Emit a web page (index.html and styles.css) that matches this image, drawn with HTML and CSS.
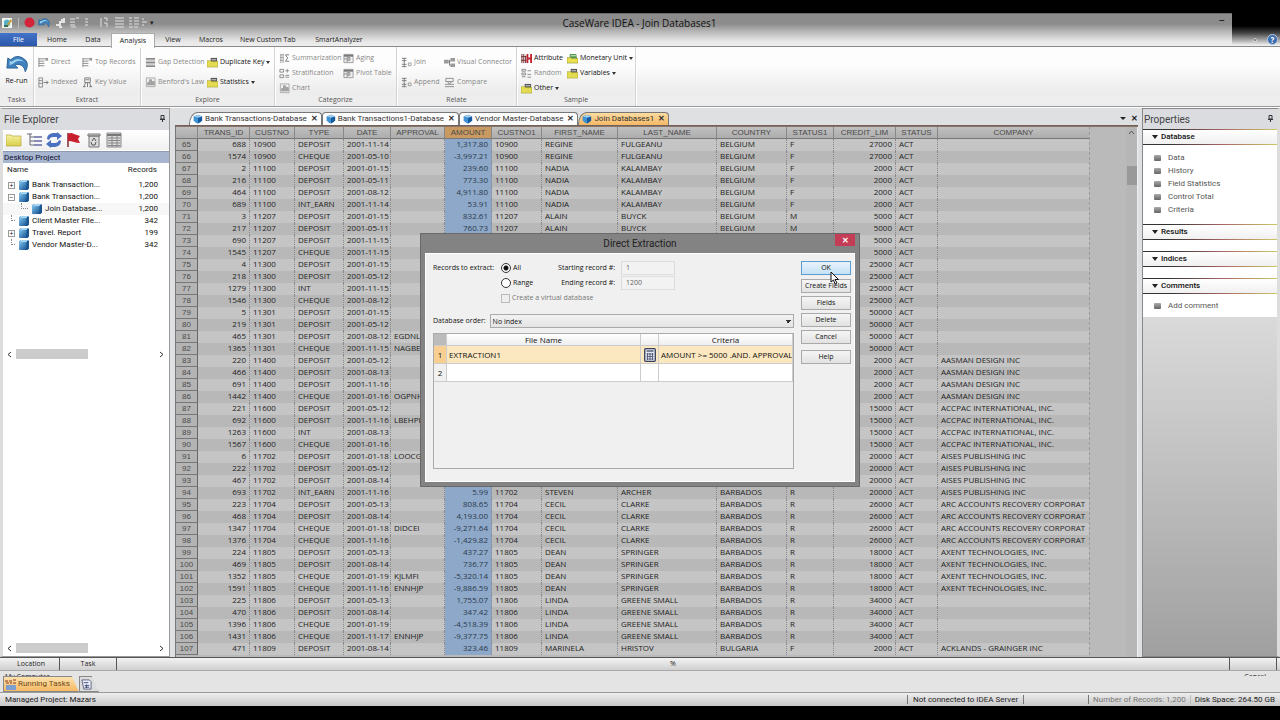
FILE: index.html
```html
<!DOCTYPE html>
<html lang="en">
<head>
<meta charset="utf-8">
<title>CaseWare IDEA - Join Databases1</title>
<link rel="stylesheet" href="styles.css">
</head>
<body>
<svg class="defs" aria-hidden="true">
  <defs>
    <linearGradient id="gb" x1="0" y1="0" x2="1" y2="1"><stop offset="0" stop-color="#7fc4ee"/><stop offset="1" stop-color="#14508f"/></linearGradient>
    <linearGradient id="gf" x1="0" y1="0" x2="0" y2="1"><stop offset="0" stop-color="#f6f0a0"/><stop offset="1" stop-color="#d8cf4a"/></linearGradient>
    <symbol id="db" viewBox="0 0 12 12"><path d="M1 2.500 3 1h7l1 1v7.500L9.500 11H2l-1-1z" fill="#1b568f"/><path d="M1 3h7.500v8H2l-1-1z" fill="url(#gb)"/><path d="M1 3 3 1h7L8.500 3z" fill="#a5d5f2"/></symbol>
    <symbol id="shield" viewBox="0 0 12 12"><path d="M1 3 6 1l5 2v4.500Q9.500 10.500 6 11.500 2.500 10.500 1 7.500z" fill="#17599f"/><path d="M1 3 6 4.500v7Q2.500 10.500 1 7.500z" fill="#3d93d6"/><path d="M1 3 6 1l5 2-5 1.500z" fill="#9fd0f2"/></symbol>
    <symbol id="list" viewBox="0 0 12 12"><path d="M1 2h7M1 4.500h6M1 7h6M1 9.500h6M1 1v10" stroke="#888" fill="none"/><path d="M8 1h3v3H8z" fill="#999"/></symbol>
    <symbol id="idx" viewBox="0 0 12 12"><path d="M1 1h4v10H1zM1 4h4M1 7h4" stroke="#888" fill="none"/><path d="M6 6h5M9 4l2 2-2 2" stroke="#777" fill="none"/></symbol>
    <symbol id="key" viewBox="0 0 12 12"><path d="M3 1h6v5H3zM4 6 2 11M8 6l2 5M6 6v5M1 10.500h3M8 10.500h3M4 3h4" stroke="#777" fill="none"/></symbol>
    <symbol id="gap" viewBox="0 0 12 12"><path d="M1 2h10M1 6h10M1 10h10" stroke="#8a8a8a" stroke-width="2"/><path d="M1 4h10M1 8h10" stroke="#c5c5c5"/></symbol>
    <symbol id="chart" viewBox="0 0 12 12"><path d="M1.500 1v9.500H11V1z" stroke="#aaa" fill="#eee"/><path d="M3 9V6h1v3M5 9V3h2v6M8 9V5h2v4" stroke="#999" fill="#aaa"/></symbol>
    <symbol id="tbl" viewBox="0 0 12 12"><path d="M1 1.500h10v9H1z" fill="#eee" stroke="#999"/><path d="M1 3h10" stroke="#777" stroke-width="2"/><path d="M4.500 3v7M7.500 5v3h-2v-3zM1 6.500h3" stroke="#888" fill="none"/></symbol>
    <symbol id="sum" viewBox="0 0 12 12"><path d="M1 2h4M1 5h4M1 8h4M2 1v10M4.500 1v10" stroke="#999" fill="none"/><path d="M11 2H7l2.500 3.500L7 9h4" stroke="#777" fill="none"/></symbol>
    <symbol id="strat" viewBox="0 0 12 12"><path d="M1 1.500h4v3H1zM1 7.500h4v3H1zM7 3h4M9 1v4M7 8h4M7 10h4" stroke="#888" fill="none"/></symbol>
    <symbol id="join" viewBox="0 0 12 12"><path d="M1 1.500h5M1 4h5M3.500 1v10M1 8h5M1 10.500h5" stroke="#777" fill="none"/><path d="M8 6.500h3v3H8z" fill="none" stroke="#999"/></symbol>
    <symbol id="vc" viewBox="0 0 12 12"><path d="M0 3h5v4H0zM7 1h5v4H7zM7 7h5v4H7z" fill="#9a9a9a"/><path d="M5 5h2M6 3v6h1" stroke="#777" fill="none"/></symbol>
    <symbol id="cmp" viewBox="0 0 12 12"><path d="M2 1.500h8v3.500H2zM1 10.500h10M1 8h10M4 5l2 3 2-3" stroke="#888" fill="none"/></symbol>
    <symbol id="rnd" viewBox="0 0 12 12"><path d="M1 1.500h4v2H1zM1 5.500h4v2H1zM1 9.500h4M7 3h4M7 7h4M7 10h4" stroke="#888" fill="none"/></symbol>
    <symbol id="attr" viewBox="0 0 12 12"><path d="M1 1v10M3 1v10M5 3v8M0 4h6M0 8h6" stroke="#6b2b2b" fill="none"/><path d="M7 1v10M11 1v10M7 6h4" stroke="#c0222f" stroke-width="2"/></symbol>
    <symbol id="fy" viewBox="0 0 12 12"><path d="M4 1h7v5H4z" fill="#555"/><path d="M5 3h5" stroke="#ddd"/><path d="M0 4h4l1 1h7v6H0z" fill="#e3dc52" stroke="#a49a28" stroke-width=".6"/></symbol>
    <symbol id="fg" viewBox="0 0 12 12"><path d="M3 1h7l1 5H3z" fill="#4e9a4a"/><path d="M4 3h6" stroke="#e5efdc"/><path d="M0 5h4l1 1h7v5H0z" fill="#e8e04f" stroke="#8d8b28" stroke-width=".6"/></symbol>
    <symbol id="undo" viewBox="0 0 24 20"><path d="M1 15 2 4l3 2Q13-2 22 7q3 5-1 12-1-7-7-8-3 0-4 1l3 3z" fill="#3f82bd" stroke="#2a5f92"/><path d="M4 12 4 7l2 1Q13 2 20 8q-8-3-12 2z" fill="#9fd2f0"/></symbol>
    <symbol id="calc" viewBox="0 0 12 14"><rect x=".7" y=".7" width="10.600" height="12.600" rx="1" fill="#e5e8ee" stroke="#35415c" stroke-width="1.300"/><path d="M2.500 3h7" stroke="#56617a" stroke-width="1.500"/><path d="M2.500 6h7M2.500 8.500h7M2.500 11h7M3.500 5v7M6 5v7M8.500 5v7" stroke="#4c5a78" stroke-width=".9"/></symbol>
  </defs>
</svg>

<header class="titlebar">
  <div class="frame">
    <div class="qat">
      <svg width="12" height="12" viewBox="0 0 12 12"><path d="M1 1h10v10H1z" fill="#f2f2ee"/><path d="M3 4q3-3 6 0v4q-3 3-6 0z" fill="#53b2c9"/><path d="m6 7 4-5 1 2-4 5z" fill="#bfa23a"/><path d="M3 8h4v2H3z" fill="#3c6f52"/></svg>
      <i class="qsep"></i>
      <svg width="11" height="11" viewBox="0 0 12 12"><circle cx="6" cy="6" r="5.500" fill="#d4243c"/></svg>
      <svg width="12" height="11"><use href="#undo"/></svg>
      <svg class="pale" width="92" height="12" viewBox="0 0 92 12"><path d="M1 8h4V5h4V1M4 10h3M6 3h4" stroke-width="2"/><path d="M15 2h5M15 5h5M15 8h5M21 1h3M16 10h5M30 2h3M30 5h3M30 8h3M46 1v9M49 1h3v3M49 6h3v4M60 1h9M60 4h9M60 7h9M60 10h9M74 1h3M79 1h5M74 4h3M79 4h5M74 7h3M79 7h5M74 10h4M79 10h4M87 2h2M87 5h3M87 8h2M90 5h2"/></svg>
      <span class="more">▾</span>
    </div>
    <h1>CaseWare IDEA - Join Databases1</h1>
    <button class="min" aria-label="Minimize">–</button>
  </div>
  <nav class="menu">
    <button class="file">File</button><button>Home</button><button>Data</button><button class="on">Analysis</button><button>View</button><button>Macros</button><button class="w3">New Custom Tab</button><button class="w3">SmartAnalyzer</button>
    <span class="help"><svg width="6" height="5" viewBox="0 0 6 5"><path d="m1 4 2-3 2 3z" fill="#555" stroke="#fff" stroke-width=".6"/></svg><b>?</b></span>
  </nav>
</header>

<section class="ribbon">
  <div class="grp tasks"><div class="big"><button><svg width="22" height="19"><use href="#undo"/></svg>Re-run</button></div><p>Tasks</p></div>
  <div class="grp extract"><div class="two">
    <button disabled><svg><use href="#list"/></svg>Direct</button><button disabled><svg><use href="#list"/></svg>Top Records</button>
    <button disabled><svg><use href="#idx"/></svg>Indexed</button><button disabled><svg><use href="#key"/></svg>Key Value</button></div><p>Extract</p></div>
  <div class="grp explore"><div class="two">
    <button disabled><svg><use href="#gap"/></svg>Gap Detection</button><button><svg><use href="#fy"/></svg>Duplicate Key <i></i></button>
    <button disabled><svg><use href="#chart"/></svg>Benford's Law</button><button><svg><use href="#fy"/></svg>Statistics <i></i></button></div><p>Explore</p></div>
  <div class="grp categ"><div class="three">
    <button disabled><svg><use href="#sum"/></svg>Summarization</button><button disabled><svg><use href="#tbl"/></svg>Aging</button>
    <button disabled><svg><use href="#strat"/></svg>Stratification</button><button disabled><svg><use href="#tbl"/></svg>Pivot Table</button>
    <button disabled><svg><use href="#chart"/></svg>Chart</button></div><p>Categorize</p></div>
  <div class="grp relate"><div class="two">
    <button disabled><svg><use href="#join"/></svg>Join</button><button disabled><svg><use href="#vc"/></svg>Visual Connector</button>
    <button disabled><svg><use href="#join"/></svg>Append</button><button disabled><svg><use href="#cmp"/></svg>Compare</button></div><p>Relate</p></div>
  <div class="grp sample"><div class="three">
    <button><svg><use href="#attr"/></svg>Attribute</button><button><svg><use href="#fg"/></svg>Monetary Unit <i></i></button>
    <button disabled><svg><use href="#rnd"/></svg>Random</button><button><svg><use href="#fy"/></svg>Variables <i></i></button>
    <button><svg><use href="#fy"/></svg>Other <i></i></button></div><p>Sample</p></div>
</section>

<main class="work">
  <aside class="explorer">
    <h2>File Explorer <svg class="pin" viewBox="0 0 5 7"><path d="M1 .5h3v3.500H1zM0 4.500h5M2.500 4v3" fill="none" stroke="#333"/></svg></h2>
    <div class="tools">
      <svg viewBox="0 0 16 16"><path d="M0 3h5l1 1h9v10H0z" fill="url(#gf)" stroke="#b5a63c" stroke-width=".7"/></svg>
      <svg viewBox="0 0 16 16"><path d="M1 2h5M4 2v11h4M4 5h4M4 9h4" stroke="#667" fill="none"/><path d="M8 5h8M8 9h8M8 13h8" stroke="#8a8bb8" stroke-width="2"/></svg>
      <svg viewBox="0 0 16 16"><path d="M1 7q0-5 6-6h4V0l5 4-5 4V5H7Q4 5 3 8zM15 9q0 5-6 6H5v1l-5-4 5-4v3h4q3 0 4-3z" fill="#4a70c0"/></svg>
      <svg viewBox="0 0 16 16"><path d="M2 1v14" stroke="#7c2a30" stroke-width="1.500"/><path d="M2 2q3-2 6 0l6 2-2 3 2 4q-3 0-6-1t-6-1z" fill="#c8202e"/></svg>
      <svg viewBox="0 0 16 16"><path d="M2 2h12v2H2zM3 4h10v11H3z" fill="#ddd" stroke="#777"/><path d="m6 9 2-3 2 3M10 10l-1 3H6l-1-3" stroke="#555" fill="none"/></svg>
      <svg viewBox="0 0 16 16"><path d="M1 1h14v14H1z" fill="#ddd" stroke="#888"/><path d="M1 3h14" stroke="#777" stroke-width="2"/><path d="M2 6h12M2 8.500h12M2 11h12M2 13.500h12M6 3v12M11 3v12" stroke="#888"/></svg>
    </div>
    <div class="proj">Desktop Project</div>
    <table class="tree">
      <thead><tr><th>Name</th><th>Records</th></tr></thead>
      <tbody>
        <tr><td><b class="pm">+</b><svg><use href="#db"/></svg>Bank Transaction...</td><td>1,200</td></tr>
        <tr><td><b class="pm">−</b><svg><use href="#db"/></svg>Bank Transaction...</td><td>1,200</td></tr>
        <tr class="sel"><td class="child"><b class="el"></b><svg><use href="#db"/></svg>Join Database...</td><td>1,200</td></tr>
        <tr><td><b class="ln"></b><svg><use href="#db"/></svg>Client Master File...</td><td>342</td></tr>
        <tr><td><b class="pm">+</b><svg><use href="#db"/></svg>Travel. Report</td><td>199</td></tr>
        <tr><td><b class="ln"></b><svg><use href="#db"/></svg>Vendor Master-D...</td><td>342</td></tr>
      </tbody>
    </table>
    <div class="hs first"><svg viewBox="0 0 5 7"><path d="M4 1 1 3.500 4 6"/></svg><i></i><svg viewBox="0 0 5 7"><path d="m1 1 3 2.500L1 6"/></svg></div>
    <div class="hs last"><svg viewBox="0 0 5 7"><path d="M4 1 1 3.500 4 6"/></svg><i></i><svg viewBox="0 0 5 7"><path d="m1 1 3 2.500L1 6"/></svg></div>
  </aside>

  <section class="center">
    <div class="tabs">
      <button class="slant"><svg><use href="#shield"/></svg>Bank Transactions-Database<b>✕</b></button>
      <button><svg><use href="#shield"/></svg>Bank Transactions1-Database<b>✕</b></button>
      <button><svg><use href="#shield"/></svg>Vendor Master-Database<b>✕</b></button>
      <button class="on slant"><svg><use href="#shield"/></svg>Join Databases1<b>✕</b></button>
      <span class="tabend"><i></i>✕</span>
    </div>
    <div class="sheet">
      <table class="grid">
        <colgroup><col class="c0"><col class="c1"><col class="c2"><col class="c3"><col class="c4"><col class="c5"><col class="c6"><col class="c7"><col class="c8"><col class="c9"><col class="c10"><col class="c11"><col class="c12"><col class="c13"><col class="c14"></colgroup>
        <thead><tr><th></th><th>TRANS_ID</th><th>CUSTNO</th><th>TYPE</th><th>DATE</th><th>APPROVAL</th><th class="amt">AMOUNT</th><th>CUSTNO1</th><th>FIRST_NAME</th><th>LAST_NAME</th><th>COUNTRY</th><th>STATUS1</th><th>CREDIT_LIM</th><th>STATUS</th><th>COMPANY</th></tr></thead>
        <tbody id="rows"></tbody>
      </table>
      <div class="vs"><svg width="7" height="5" viewBox="0 0 7 5"><path d="m1 4 2.500-3L6 4" fill="none" stroke="#555"/></svg><i></i></div>
    </div>
  </section>

  <aside class="props">
    <h2>Properties <svg class="pin" viewBox="0 0 5 7"><path d="M1 .5h3v3.500H1zM0 4.500h5M2.500 4v3" fill="none" stroke="#333"/></svg></h2>
    <h3><i></i>Database</h3>
    <ul class="items"><li>Data</li><li>History</li><li>Field Statistics</li><li>Control Total</li><li>Criteria</li></ul>
    <h3><i></i>Results</h3><div class="empty"></div>
    <h3><i></i>Indices</h3><div class="empty"></div>
    <h3><i></i>Comments</h3>
    <ul class="add"><li>Add comment</li></ul>
    <div class="rest"></div>
  </aside>

  <form class="dialog" role="dialog" aria-label="Direct Extraction">
    <div class="dtitle">Direct Extraction<button type="button" aria-label="Close">✕</button></div>
    <div class="dbody">
      <div class="left">
        <div class="opts">
          <span>Records to extract:</span>
          <label><input type="radio" name="r" checked>All</label>
          <label class="rl" for="s">Starting record #:</label><input type="text" id="s" value="1" disabled>
          <span></span>
          <label><input type="radio" name="r">Range</label>
          <label class="rl" for="e">Ending record #:</label><input type="text" id="e" value="1200" disabled>
          <span></span>
          <label class="virt"><input type="checkbox" disabled>Create a virtual database</label>
        </div>
        <div class="order"><label for="o">Database order:</label><select id="o"><option>No index</option></select></div>
        <div class="files"><table>
          <thead><tr><th class="n"></th><th>File Name</th><th class="k"></th><th class="cr">Criteria</th></tr></thead>
          <tbody>
            <tr class="cur"><th>1</th><td>EXTRACTION1</td><td><svg width="12" height="14"><use href="#calc"/></svg></td><td>AMOUNT &gt;= 5000 .AND. APPROVAL=</td></tr>
            <tr><th>2</th><td></td><td></td><td></td></tr>
          </tbody></table></div>
      </div>
      <div class="btns"><button type="button" class="hot">OK</button><button type="button">Create Fields</button><button type="button">Fields</button><button type="button">Delete</button><button type="button">Cancel</button><button type="button" class="hp">Help</button></div>
    </div>
    <svg class="cursor" width="9" height="14" viewBox="0 0 9 14"><path d="M1 1v10l2.500-2L5 13l2-1-2-3.500h3.500z" fill="#fff" stroke="#111"/></svg>
  </form>
</main>

<section class="dock">
  <table><thead><tr><th class="d1">Location</th><th class="d1">Task</th><th>%</th><th class="d4"></th></tr></thead></table>
  <div class="cut"><span>My Computer</span><span class="cc">Cancel</span></div>
  <div class="dtabs"><button class="run"><svg width="12" height="11" viewBox="0 0 12 11"><path d="M0 2h3M4 2h3M8 1h3M1 4h3M5 4h2M8 4h3" stroke="#8a3b1c"/><path d="M1 6h10v5H1z" fill="#7c9fd0"/></svg>Running Tasks</button><button class="doc" aria-label="Log"><svg width="11" height="11" viewBox="0 0 12 12"><path d="M1 1h8l2 2v8H3z" fill="#eef" stroke="#56617a"/><path d="M3 4h5M4 7h5M4 9h5M6 6v4" stroke="#3c4a6b" fill="none"/></svg></button></div>
</section>
<footer class="status"><span class="proj-name">Managed Project: Mazars</span><span class="srv">Not connected to IDEA Server</span><span class="num">Number of Records: 1,200</span><span class="disk">Disk Space: 264.50 GB</span></footer>
<div class="black"></div>
<script src="app.js"></script>
</body>
</html>
```

FILE: styles.css
```css
* { box-sizing: border-box; }
body { margin: 0; min-height: 100vh; display: flex; flex-direction: column; background: #e4e4e4; font: 8px/12px Roboto, "Open Sans", sans-serif; color: #222; }
button, input, select { font: inherit; color: inherit; margin: 0; padding: 0; border: 0; background: none; border-radius: 0; }
h1, h2, h3, p, ul { margin: 0; padding: 0; font-weight: normal; list-style: none; }
table { border-collapse: separate; border-spacing: 0; }
th { font-weight: normal; }
th, td { padding: 0; }
.defs { position: absolute; width: 0; height: 0; }

.titlebar { background: linear-gradient(#000 26px, #444 33px, #eee 45px); padding-top: 13px; position: relative; }
.frame { display: flex; align-items: flex-start; height: 34px; margin-right: 48px; background: linear-gradient(#8c8c8c, #8c8c8c 10px, #b4b4b4 17px, #e6e6e6 27px, #f0f0f0); border-top: 1px solid #6c6c6c; }
.qat { display: flex; align-items: center; gap: 3px; flex: 1 0 54px; padding: 1px 0 0 1px; height: 16px; }
.qsep { width: 1px; height: 10px; background: #bbb; margin: 0 2px; }
.pale { fill: none; stroke: #e2e2e2; margin-left: 2px; }
.more { color: #222; font-size: 7px; }
h1 { font: 10px/18px "Open Sans", sans-serif; color: #111; }
.min { flex: 1 0 0; text-align: right; padding-right: 7px; font-size: 10px; line-height: 14px; color: #111; }
.menu { display: flex; position: absolute; left: 0; right: 0; bottom: 0; height: 14px; border-bottom: 1px solid #8a8a8a; font: 7px/14px "Open Sans", sans-serif; }
.menu button { padding: 0 8px; min-width: 36px; color: #222; }
.menu button.w3 { padding: 0 9px; min-width: 69px; }
.menu .file { background: linear-gradient(#4374c9, #2a57a9); color: #fff; min-width: 37px; margin-right: 2px; }
.menu .on { background: #fdfdfd; height: 15px; border: 1px solid #aaa; border-bottom: 0; min-width: 44px; padding: 0 5px; }
.help { margin-left: auto; display: flex; align-items: center; gap: 9px; padding-right: 2px; }
.help b { width: 11px; height: 11px; border-radius: 50%; background: #3c6dad; border: 1px solid #b8cce2; color: #fff; font: bold 8px/9px "Open Sans", sans-serif; text-align: center; }

.ribbon { display: flex; height: 60px; background: linear-gradient(#fdfdfd 30%, #ededed 75%, #eee); border-bottom: 1px solid #999; font: 7px/12px "Open Sans", sans-serif; }
.grp { display: flex; flex-direction: column; border-right: 1px solid #d4d4d4; box-shadow: 1px 0 #fff; }
.grp p { text-align: center; color: #555; line-height: 12px; }
.grp button { display: flex; align-items: center; gap: 2px; white-space: nowrap; color: #111; }
.grp button:disabled { color: #888; }
.grp button svg { width: 11px; height: 11px; flex: none; }
.grp i { border: 2px solid transparent; border-top: 3px solid #333; border-bottom: 0; }
.tasks { width: 34px; } .extract { width: 107px; } .explore { width: 134px; } .categ { width: 122px; } .relate { width: 120px; } .sample { width: 119px; }
.big { height: 47px; padding-top: 7px; }
.grp .big button { flex-direction: column; margin: 0 auto; }
.grp .big svg { width: 22px; height: 19px; }
.two, .three { display: grid; height: 47px; padding: 5px 0 0 4px; grid-auto-rows: 20px; align-content: start; justify-content: start; }
.three { grid-auto-rows: 14px; row-gap: 1px; padding-top: 4px; }
.extract .two { grid-template-columns: 44px auto; }
.explore .two { grid-template-columns: 62px auto; }
.categ .three { grid-template-columns: 64px auto; }
.relate .two { grid-template-columns: 43px auto; }
.sample .three { grid-template-columns: 46px auto; }

.work { flex: 1; display: flex; position: relative; background: #dfe0e2; border-top: 1px solid #fff; }
.explorer { width: 170px; display: flex; flex-direction: column; border: 1px solid #999; border-left: 3px solid #ddd; background: #fff; }
h2 { font-size: 10px; line-height: 20px; color: #444; display: flex; justify-content: space-between; background: #dbdce0; padding: 1px 4px 0 1px; }
.pin { width: 5px; height: 7px; margin-top: 5px; }
.tools { display: flex; gap: 4px; padding: 1px 3px; background: linear-gradient(#fff, #f0f0f0); }
.tools svg { width: 16px; height: 18px; }
.proj { background: #a8b5cf; line-height: 11px; color: #113; padding-left: 1px; border-top: 1px solid #8d9ab4; margin-top: 1px; }
.tree { width: 100%; }
.tree th { text-align: left; padding: 0 4px; line-height: 14px; height: 16px; vertical-align: top; }
.tree th + th, .tree td + td { text-align: right; }
.tree th + th { padding-right: 12px; }
.tree td + td { padding-right: 11px; }
.tree td { height: 12px; white-space: nowrap; color: #111; }
.tree td:first-child { display: flex; align-items: center; padding-left: 5px; }
.tree td.child { padding-left: 18px; }
.tree td svg { width: 12px; height: 12px; margin: 0 2px 0 3px; }
.tree .sel td { background: #f7f7f7; }
.pm { width: 7px; height: 7px; border: 1px solid #999; font: 7px/5px "Open Sans", sans-serif; text-align: center; }
.ln, .el { width: 7px; height: 6px; border-left: 1px dotted #888; border-bottom: 1px dotted #888; align-self: flex-start; }
.tree .ln { margin-left: 3px; width: 4px; }
.hs { display: flex; align-items: center; height: 12px; padding: 0 5px 0 4px; }
.hs svg { width: 5px; height: 7px; fill: none; stroke: #333; }
.hs i { width: 72px; height: 10px; background: #ccc; margin: 0 auto 0 4px; }
.hs.first { margin-top: 97px; }
.hs.last { margin-top: auto; margin-bottom: 2px; }

.center { flex: 1; min-width: 0; display: flex; flex-direction: column; padding: 4px 4px 0 5px; }
.tabs { display: flex; height: 14px; padding-left: 14px; border-bottom: 1px solid #6d625c; }
.tabs button { display: flex; align-items: center; gap: 2px; padding: 0 3px; background: #fdfdfd; border: 1px solid #777; border-bottom: 0; border-radius: 4px 4px 0 0; white-space: nowrap; color: #333; }
.tabs button.slant { border-top-left-radius: 9px 12px; }
.tabs button svg { width: 10px; height: 10px; }
.tabs button b { margin-left: 2px; font-size: 8px; }
.tabs .on { background: linear-gradient(#fbdca0, #f5b866); }
.tabend { margin-left: auto; display: flex; align-items: center; gap: 5px; font-weight: bold; }
.tabend i { border: 3px solid transparent; border-top: 3px solid #222; border-bottom: 0; }
.sheet { flex: 1; display: flex; justify-content: space-between; background: #bababa; border-left: 1px solid #777; border-top: 1px solid #8c7468; }
.grid { table-layout: fixed; width: 913px; flex: none; align-self: flex-start; color: #222; border-right: 1px dashed #9a9a9a; font-family: "Open Sans", sans-serif; }
.grid th, .grid td { height: 12px; line-height: 11px; white-space: nowrap; overflow: hidden; vertical-align: middle; padding: 0 3px; border-right: 1px dotted #8a8a8a; }
.grid td { line-height: 10px; vertical-align: top; }
.grid td:last-child, .grid th:last-child { border-right: 0; }
.grid th { font-family: "Liberation Sans", sans-serif; color: #4a4a4a; background: linear-gradient(#c0c0c0, #adadad); border-bottom: 1px solid #777; border-right: 1px solid #888; padding: 0; }
.grid thead th.amt { background: #c89a62; }
.grid tbody th { background: #b4b4b4; border-right: 1px solid #666; }
.grid tbody tr { background: #c5c5c5; }
.grid tbody tr:nth-child(even) { background: #b8b8b8; }
.grid td.r { text-align: right; }
.grid td.amt { background: #8da8c8; color: #2c3a4d; }
.c0 { width: 22px; } .c1 { width: 52px; } .c2 { width: 45px; } .c3 { width: 49px; } .c4 { width: 47px; } .c5 { width: 54px; } .c6 { width: 47px; } .c7 { width: 50px; } .c8 { width: 76px; } .c9 { width: 99px; } .c10 { width: 70px; } .c11 { width: 47px; } .c12 { width: 62px; } .c13 { width: 42px; } .c14 { width: 151px; }
.vs { width: 12px; display: flex; flex-direction: column; align-items: center; padding-top: 3px; background: #b6b6b6; border-right: 1px solid #eee; }
.vs i { width: 10px; height: 19px; background: #999; margin-top: 31px; }

.props { width: 138px; border: 1px solid #888; border-right: 3px solid #ddd; display: flex; flex-direction: column; background: #fff; }
.props h2 { line-height: 19px; }
h3 { font-size: 8px; font-weight: 500; line-height: 14px; padding-left: 9px; display: flex; align-items: center; gap: 3px; color: #111; background: linear-gradient(#fff, #f0f0f0); border-top: 1px solid #777; border-bottom: 1px solid; border-image: linear-gradient(90deg, #333 20%, #a66 60%, #cc6) 1; }
h3 i { border: 3px solid transparent; border-top: 4px solid #222; border-bottom: 0; }
.items { padding: 6px 0 8px; }
.props li { display: flex; align-items: center; height: 13px; padding-left: 11px; gap: 7px; color: #555; }
.props li::before { content: ""; width: 7px; height: 6px; background: linear-gradient(#aaa, #666); border-radius: 1px; }
.empty { height: 11px; }
.add { padding: 5px 0; }
.rest { flex: 1; background: linear-gradient(#dadada, #a0a0a0); }

.dialog { position: absolute; left: 0; right: 0; top: 125px; width: 440px; margin: 0 auto; background: #838383; border: 1px solid #6a6a6a; padding: 0 4px 4px; font: 7px/14px "Open Sans", sans-serif; color: #111; }
.dtitle { position: relative; font: 10px/19px Roboto, sans-serif; text-align: center; color: #222; }
.dtitle button { position: absolute; right: 0; top: 0; width: 20px; height: 12px; background: #c43c56; color: #fff; font: bold 8px/12px "Open Sans", sans-serif; }
.dbody { display: flex; gap: 7px; background: #f0f0f0; border: 1px solid #fff; padding: 7px 3px 12px 7px; }
.left { flex: 1; min-width: 0; }
.opts { display: grid; grid-template-columns: 68px 54px 66px 54px; row-gap: 1px; align-items: center; }
.opts label { display: flex; align-items: center; gap: 2px; white-space: nowrap; }
.opts .rl { justify-content: flex-end; padding-right: 6px; }
.opts input[type=text] { width: 54px; height: 14px; padding: 0 4px; border: 1px solid #ddd; background: #f2f2f2; color: #666; }
.opts input[type=radio] { width: 10px; height: 10px; appearance: none; border: 1px solid #333; border-radius: 50%; background: #fff; }
.opts input[type=radio]:checked { background: radial-gradient(#111 0 2px, #fff 3px); }
.opts input[type=checkbox] { width: 9px; height: 9px; appearance: none; border: 1px solid #bbb; background: #eee; }
.virt { grid-column: 2 / 5; color: #777; }
.order { display: flex; align-items: center; margin: 9px 0 5px; gap: 4px; }
.order select { flex: 1; height: 14px; appearance: none; border: 1px solid #aaa; padding: 0 2px; background: linear-gradient(45deg, transparent 50%, #333 50%) calc(100% - 5px) 5px / 3px 3px no-repeat, linear-gradient(-45deg, transparent 50%, #333 50%) calc(100% - 2px) 5px / 3px 3px no-repeat, linear-gradient(#f2f2f2, #e4e4e4); }
.files { height: 136px; border: 1px solid #aaa; overflow: hidden; }
.files table { width: 100%; table-layout: fixed; font-size: 8px; line-height: 11px; }
.files thead th { height: 12px; background: linear-gradient(#fff, #eee); }
.files th, .files td { border-right: 1px solid #ccc; border-bottom: 1px solid #ccc; white-space: nowrap; overflow: hidden; }
.files td { background: #fff; height: 18px; padding: 0 2px; vertical-align: middle; }
.files thead .n { width: 13px; background: #bbb; }
.files thead .k { width: 18px; }
.files thead .cr { width: 134px; }
.files .cur td { background: #fbe7c0; }
.files .cur th { background: #f8cf91; }
.files svg { display: block; margin: 0 auto; }
.btns { width: 50px; display: flex; flex-direction: column; gap: 3px; }
.btns button { height: 14px; line-height: 12px; border: 1px solid #aaa; background: linear-gradient(#f5f5f5, #e2e2e2); white-space: nowrap; }
.btns .hot { border-color: #5a9bd0; background: linear-gradient(#e8f3fc, #c5e1f6); margin-bottom: 1px; }
.btns .hp { margin-top: 3px; }
.cursor { position: absolute; left: 409px; top: 37px; }

.dock { border-top: 1px solid #555; background: #e4e4e4; font: 7px/12px "Open Sans", sans-serif; }
.dock table { width: 100%; padding: 0 3px; table-layout: fixed; background: linear-gradient(#f3f3f3, #d0d0d0); border-bottom: 1px solid #aaa; }
.dock th { height: 12px; border-right: 1px solid #555; }
.d1 { width: 57px; } .d4 { width: 47px; }
.cut { display: flex; justify-content: space-between; height: 5px; overflow: hidden; padding: 0 14px 0 5px; }
.dtabs { display: flex; padding-left: 3px; height: 16px; }
.dtabs button { display: flex; align-items: center; gap: 1px; border: 1px solid #888; clip-path: polygon(0 0, calc(100% - 7px) 0, 100% 100%, 0 100%); padding: 0 8px 0 1px; }
.dtabs .run { background: linear-gradient(#fde2ae, #f6b963); color: #6d4a1a; font: 8px/12px Roboto, sans-serif; }
.dtabs .doc { background: #ddd; padding: 0 6px 0 1px; }
.status { display: flex; align-items: center; line-height: 14px; height: 14px; background: linear-gradient(#eee, #c8c8c8); border-top: 1px solid #999; padding: 0 5px; }
.proj-name { flex: 1; }
.srv { border-left: 1px solid #777; border-right: 1px solid #777; padding: 0 5px; line-height: 9px; margin-right: 64px; }
.num { border-left: 1px solid #777; border-right: 1px solid #bbb; padding: 0 4px; line-height: 9px; color: #777; margin-right: 4px; }
.black { height: 14px; background: #000; }
```

FILE: app.js
```js
const types = { D: 'DEPOSIT', C: 'CHEQUE', I: 'INT', E: 'INT_EARN' };
const groups = {
  10900: ['REGINE', 'FULGEANU', 'BELGIUM', 'F', 27000, ''],
  11100: ['NADIA', 'KALAMBAY', 'BELGIUM', 'F', 2000, ''],
  11207: ['ALAIN', 'BUYCK', 'BELGIUM', 'M', 5000, ''],
  11300: ['', '', '', '', 25000, ''],
  11301: ['', '', '', '', 50000, ''],
  11400: ['', '', '', '', 2000, 'AASMAN DESIGN INC'],
  11600: ['', '', '', '', 15000, 'ACCPAC INTERNATIONAL, INC.'],
  11702: ['STEVEN', 'ARCHER', 'BARBADOS', 'R', 20000, 'AISES PUBLISHING INC'],
  11704: ['CECIL', 'CLARKE', 'BARBADOS', 'R', 26000, 'ARC ACCOUNTS RECOVERY CORPORAT'],
  11805: ['DEAN', 'SPRINGER', 'BARBADOS', 'R', 18000, 'AXENT TECHNOLOGIES, INC.'],
  11806: ['LINDA', 'GREENE SMALL', 'BARBADOS', 'R', 34000, ''],
  11809: ['MARINELA', 'HRISTOV', 'BULGARIA', 'F', 2000, 'ACKLANDS - GRAINGER INC']
};
// trans id | customer | type | month-day | amount | approval
const data = `688|10900|D|11-14|1,317.80|
1574|10900|C|05-10|-3,997.21|
2|11100|D|01-15|239.60|
216|11100|D|05-11|773.30|
464|11100|D|08-12|4,911.80|
689|11100|E|11-14|53.91|
3|11207|D|01-15|832.61|
217|11207|D|05-11|760.73|
690|11207|D|11-15||
1545|11207|C|11-15||
4|11300|D|01-15||
218|11300|D|05-12||
1279|11300|I|11-15||
1546|11300|C|08-12||
5|11301|D|01-15||
219|11301|D|05-12||
465|11301|D|08-12||EGDNLI
1365|11301|C|11-15||NAGBE
220|11400|D|05-12||
466|11400|D|08-13||
691|11400|D|11-16||
1442|11400|C|01-16||OGPNH
221|11600|D|05-12||
692|11600|D|11-16||LBEHPE
1263|11600|I|08-13||
1567|11600|C|01-16||
6|11702|D|01-18||LOOCG
222|11702|D|05-12||
467|11702|D|08-14||
693|11702|E|11-16|5.99|
223|11704|D|05-13|808.65|
468|11704|D|08-14|4,193.00|
1347|11704|C|01-18|-9,271.64|DIDCEI
1376|11704|C|11-16|-1,429.82|
224|11805|D|05-13|437.27|
469|11805|D|08-14|736.77|
1352|11805|C|01-19|-5,320.14|KJLMFI
1591|11805|C|11-16|-9,886.59|ENNHJP
225|11806|D|05-13|1,755.07|
470|11806|D|08-14|347.42|
1396|11806|C|01-19|-4,518.39|
1431|11806|C|11-17|-9,377.75|ENNHJP
471|11809|D|08-14|323.46|`;
const classes = ['r', '', '', '', '', 'amt r', '', '', '', '', '', 'r', '', ''];
const body = document.getElementById('rows');
data.split('\n').forEach((line, i) => {
  const [id, cust, type, day, amount, approval] = line.split('|');
  const [first, last, country, sex, limit, company] = groups[cust];
  const details = amount ? [cust, first, last, country, sex] : ['', '', '', '', ''];
  const tr = body.insertRow();
  const th = document.createElement('th');
  th.textContent = 65 + i;
  tr.append(th);
  [id, cust, types[type], '2001-' + day, approval, amount, ...details, limit, 'ACT', company].forEach((v, k) => {
    const td = tr.insertCell();
    td.textContent = v;
    td.className = classes[k];
  });
});
```
